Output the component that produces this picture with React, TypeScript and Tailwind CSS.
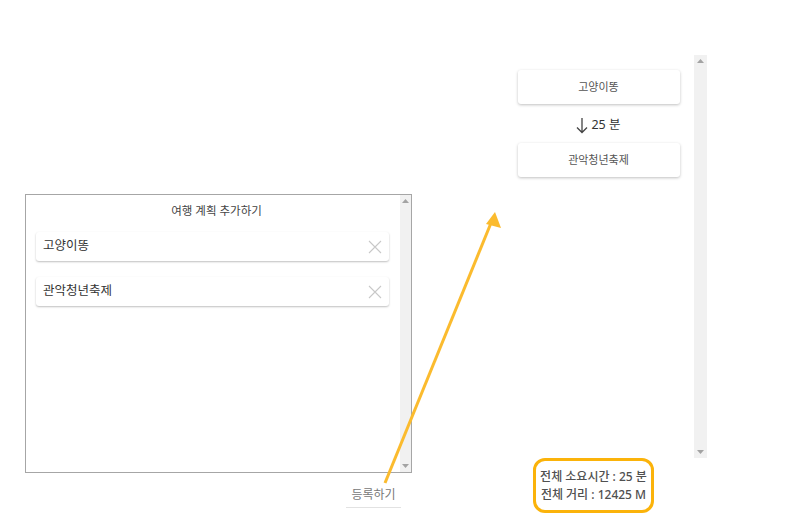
import React from "react";

const font = { fontFamily: '"Noto Sans", "Noto Sans CJK KR", sans-serif' };

const ScrollBar: React.FC<{ className?: string }> = ({ className }) => (
  <div className={`flex flex-col justify-between items-center bg-[#f1f1f1] ${className ?? ""}`}>
    <svg width="7" height="4" viewBox="0 0 7 4" className="mt-[4px]">
      <path d="M3.5 0 L7 4 L0 4 Z" fill="#a3a3a3" />
    </svg>
    <svg width="7" height="4" viewBox="0 0 7 4" className="mb-[4px]">
      <path d="M0 0 L7 0 L3.5 4 Z" fill="#a3a3a3" />
    </svg>
  </div>
);

const CloseIcon = () => (
  <svg width="14" height="14" viewBox="0 0 14 14">
    <path d="M1 1 L13 13 M13 1 L1 13" stroke="#c8c8c8" strokeWidth="1.1" />
  </svg>
);

const PlanItem: React.FC<{ name: string }> = ({ name }) => (
  <div className="flex items-center justify-between h-[29px] pl-[7px] pr-[7px] rounded-[3px] bg-white shadow-[0_1px_2px_rgba(0,0,0,0.25)]">
    <span className="text-[12.5px] text-[#333]">{name}</span>
    <CloseIcon />
  </div>
);

const RouteCard: React.FC<{ name: string }> = ({ name }) => (
  <div className="flex items-center justify-center h-[34px] w-[162px] rounded-[3px] bg-white shadow-[0_1px_3px_rgba(0,0,0,0.25)] text-[11px] text-[#555]">
    {name}
  </div>
);

export default function App() {
  return (
    <div className="relative w-[800px] h-[529px] bg-white flex items-start overflow-hidden" style={font}>
      {/* left: plan editor */}
      <div className="ml-[25px] mt-[194px] flex flex-col items-end w-[387px]">
        <div className="flex w-[387px] h-[279px] border border-[#a6a6a6]">
          <div className="flex-1 flex flex-col pl-[10px] pr-[11px]">
            <div className="h-[18px] mt-[7px] pl-[8px] text-center text-[11.5px] leading-[18px] text-[#444]">
              여행 계획 추가하기
            </div>
            <div className="mt-[12px] flex flex-col gap-[16px]">
              <PlanItem name="고양이똥" />
              <PlanItem name="관악청년축제" />
            </div>
          </div>
          <ScrollBar className="w-[11px]" />
        </div>
        <button className="mt-[9px] mr-[11px] w-[55px] h-[26px] border-b border-[#e2e2e2] text-[12px] text-[#777]">
          등록하기
        </button>
      </div>

      {/* right: route result */}
      <div className="ml-[93px] mt-[55px] flex flex-col">
        <div className="flex w-[202px] h-[403px]">
          <div className="flex-1 flex flex-col items-center pt-[15px] pr-[2px]">
            <RouteCard name="고양이똥" />
            <div className="h-[39px] pt-[3px] flex items-center gap-[3px] text-[12.5px] text-[#333]">
              <svg width="12" height="17" viewBox="0 0 12 17">
                <path d="M6 1 V15.5 M1 10.5 L6 15.5 L11 10.5" stroke="#444" strokeWidth="1.3" fill="none" />
              </svg>
              <span>25 분</span>
            </div>
            <RouteCard name="관악청년축제" />
          </div>
          <ScrollBar className="w-[13px]" />
        </div>
        <div className="ml-[28px] w-[121px] h-[55px] rounded-[12px] border-[3px] border-[#fbb30a] flex flex-col items-center justify-center text-[12px] leading-[18px] font-medium text-[#505050]">
          <span>전체 소요시간 : 25 분</span>
          <span>전체 거리 : 12425 M</span>
        </div>
      </div>

      {/* annotation arrow */}
      <svg className="absolute left-0 top-0 pointer-events-none" width="800" height="529" viewBox="0 0 800 529">
        <line x1="385" y1="483" x2="491" y2="223" stroke="#fbbb2e" strokeWidth="3" />
        <path d="M495 212 L501 228 L486 224 Z" fill="#fbbb2e" />
      </svg>
    </div>
  );
}
